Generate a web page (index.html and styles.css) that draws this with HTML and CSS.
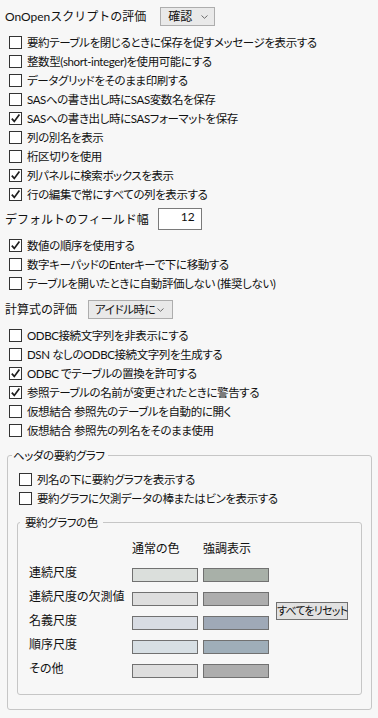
FILE: index.html
```html
<!DOCTYPE html>
<html lang="ja">
<head>
<meta charset="utf-8">
<title>テーブル設定</title>
<link rel="stylesheet" href="styles.css">
</head>
<body>
<div class="page">
  <div class="opt-row r1">
    <span class="lbl">OnOpenスクリプトの評価</span>
    <div class="select sel1"><span>確認</span><svg class="chev" viewBox="0 0 7 4" width="7" height="4"><path d="M0.5 0.5 L3.5 3.3 L6.5 0.5" fill="none" stroke="#6b6b6b" stroke-width="1"/></svg></div>
  </div>

  <div class="checks c1">
    <div class="cb"><span class="box"></span><span class="t">要約テーブルを閉じるときに保存を促すメッセージを表示する</span></div>
    <div class="cb"><span class="box"></span><span class="t">整数型(short-integer)を使用可能にする</span></div>
    <div class="cb"><span class="box"></span><span class="t">データグリッドをそのまま印刷する</span></div>
    <div class="cb"><span class="box"></span><span class="t">SASへの書き出し時にSAS変数名を保存</span></div>
    <div class="cb"><span class="box"><svg class="tick" viewBox="0 0 11 11" width="11" height="11"><path d="M1.8 5.6 L4.3 8.4 L9.4 1.6" fill="none" stroke="#1e1e1e" stroke-width="1.7"/></svg></span><span class="t">SASへの書き出し時にSASフォーマットを保存</span></div>
    <div class="cb"><span class="box"></span><span class="t">列の別名を表示</span></div>
    <div class="cb"><span class="box"></span><span class="t">桁区切りを使用</span></div>
    <div class="cb"><span class="box"><svg class="tick" viewBox="0 0 11 11" width="11" height="11"><path d="M1.8 5.6 L4.3 8.4 L9.4 1.6" fill="none" stroke="#1e1e1e" stroke-width="1.7"/></svg></span><span class="t">列パネルに検索ボックスを表示</span></div>
    <div class="cb"><span class="box"><svg class="tick" viewBox="0 0 11 11" width="11" height="11"><path d="M1.8 5.6 L4.3 8.4 L9.4 1.6" fill="none" stroke="#1e1e1e" stroke-width="1.7"/></svg></span><span class="t">行の編集で常にすべての列を表示する</span></div>
  </div>

  <div class="opt-row r2">
    <span class="lbl">デフォルトのフィールド幅</span>
    <div class="num">12</div>
  </div>

  <div class="checks c2">
    <div class="cb"><span class="box"><svg class="tick" viewBox="0 0 11 11" width="11" height="11"><path d="M1.8 5.6 L4.3 8.4 L9.4 1.6" fill="none" stroke="#1e1e1e" stroke-width="1.7"/></svg></span><span class="t">数値の順序を使用する</span></div>
    <div class="cb"><span class="box"></span><span class="t">数字キーパッドのEnterキーで下に移動する</span></div>
    <div class="cb"><span class="box"></span><span class="t">テーブルを開いたときに自動評価しない (推奨しない)</span></div>
  </div>

  <div class="opt-row r3">
    <span class="lbl">計算式の評価</span>
    <div class="select sel2"><span class="t">アイドル時に</span><svg class="chev" viewBox="0 0 7 4" width="7" height="4"><path d="M0.5 0.5 L3.5 3.3 L6.5 0.5" fill="none" stroke="#6b6b6b" stroke-width="1"/></svg></div>
  </div>

  <div class="checks c3">
    <div class="cb"><span class="box"></span><span class="t">ODBC接続文字列を非表示にする</span></div>
    <div class="cb"><span class="box"></span><span class="t">DSN なしのODBC接続文字列を生成する</span></div>
    <div class="cb"><span class="box"><svg class="tick" viewBox="0 0 11 11" width="11" height="11"><path d="M1.8 5.6 L4.3 8.4 L9.4 1.6" fill="none" stroke="#1e1e1e" stroke-width="1.7"/></svg></span><span class="t">ODBC でテーブルの置換を許可する</span></div>
    <div class="cb"><span class="box"><svg class="tick" viewBox="0 0 11 11" width="11" height="11"><path d="M1.8 5.6 L4.3 8.4 L9.4 1.6" fill="none" stroke="#1e1e1e" stroke-width="1.7"/></svg></span><span class="t">参照テーブルの名前が変更されたときに警告する</span></div>
    <div class="cb"><span class="box"></span><span class="t">仮想結合 参照先のテーブルを自動的に開く</span></div>
    <div class="cb"><span class="box"></span><span class="t">仮想結合 参照先の列名をそのまま使用</span></div>
  </div>

  <fieldset class="fs outer">
    <legend class="lg-outer"><span class="t">ヘッダの要約グラフ</span></legend>
    <div class="outer-body">
      <div class="checks c4">
        <div class="cb"><span class="box"></span><span class="t">列名の下に要約グラフを表示する</span></div>
        <div class="cb"><span class="box"></span><span class="t">要約グラフに欠測データの棒またはビンを表示する</span></div>
      </div>

      <fieldset class="fs inner">
        <legend class="lg-inner"><span class="t">要約グラフの色</span></legend>
        <div class="inner-body">
          <div class="colors">
            <span class="hd hd0"></span>
            <span class="hd hd1">通常の色</span>
            <span class="hd hd2">強調表示</span>

            <span class="clabel">連続尺度</span>
            <span class="cell n"><span class="sw" style="background:#dbdfdc"></span></span>
            <span class="cell h"><span class="sw" style="background:#a8b0a8"></span></span>

            <span class="clabel">連続尺度の欠測値</span>
            <span class="cell n"><span class="sw" style="background:#dedede"></span></span>
            <span class="cell h"><span class="sw" style="background:#adadad"></span></span>

            <span class="clabel">名義尺度</span>
            <span class="cell n"><span class="sw" style="background:#d8dce3"></span></span>
            <span class="cell h"><span class="sw" style="background:#9fa9b7"></span></span>

            <span class="clabel">順序尺度</span>
            <span class="cell n"><span class="sw" style="background:#d7dfe4"></span></span>
            <span class="cell h"><span class="sw" style="background:#9faeb9"></span></span>

            <span class="clabel">その他</span>
            <span class="cell n"><span class="sw" style="background:#dedede"></span></span>
            <span class="cell h"><span class="sw" style="background:#adadad"></span></span>

            <button class="reset" type="button">すべてをリセット</button>
          </div>
        </div>
      </fieldset>
    </div>
  </fieldset>
</div>
</body>
</html>
```

FILE: styles.css
```css
* {
  box-sizing: border-box;
}

html,
body {
  margin: 0;
  padding: 0;
  background: #f7f7f7;
}

body {
  width: 378px;
  height: 718px;
  overflow: hidden;
  font-family: Lato, "Noto Sans CJK JP", sans-serif;
  font-size: 12px;
  font-feature-settings: "palt";
  color: #111;
  line-height: 19px;
}

.page {
  padding: 7px 6px 0 5px;
}

/* option text uses narrower proportional kana */
.t {
  font-size: 11.5px;
  letter-spacing: -0.4px;
}

/* label + control rows */
.opt-row {
  display: flex;
  align-items: center;
  gap: 11px;
  height: 19px;
  white-space: nowrap;
}

.lbl {
  font-feature-settings: normal;
}

.r1 {
  gap: 14px;
}

.r2 {
  height: 22px;
  margin-top: 4px;
  gap: 9px;
}

.r3 {
  margin-top: 7px;
}

.select {
  display: flex;
  align-items: center;
  height: 19px;
  padding: 0 6px 0 7px;
  border: 1px solid #adadad;
  background: #e9e9e9;
  line-height: 17px;
}

.sel1 {
  width: 55px;
}

.sel2 {
  width: 85px;
  padding-left: 6px;
  padding-right: 8px;
}

.chev {
  margin-left: auto;
  flex: none;
}

.num {
  width: 44px;
  height: 22px;
  border: 1px solid #7a7a7a;
  background: #fff;
  text-align: right;
  padding: 0 6px 0 0;
  line-height: 16px;
}

/* checkbox lists */
.checks {
  display: flex;
  flex-direction: column;
}

.c1 {
  margin-top: 7px;
}

.c2 {
  margin-top: 6px;
}

.c3 {
  margin-top: 7px;
}

.cb {
  display: flex;
  align-items: center;
  gap: 5px;
  height: 19px;
  padding-left: 4px;
  white-space: nowrap;
}

.box {
  flex: none;
  width: 13px;
  height: 13px;
  border: 1px solid #333;
  background: #fff;
  display: flex;
  align-items: center;
  justify-content: center;
}

.tick {
  display: block;
}

/* group boxes */
.fs {
  margin: 0;
  padding: 0;
  min-width: 0;
  border: 1px solid #c6c6c6;
  border-radius: 3px;
}

.fs legend {
  line-height: 19px;
  white-space: nowrap;
}

.outer {
  margin: 6px 0 0 2px;
}

.lg-outer {
  margin-left: 4px;
  padding: 0 3px 0 1px;
}

.outer-body {
  padding: 5px 9px 14px 9px;
}

.c4 .cb {
  padding-left: 2px;
}

.inner {
  margin-top: 5px;
}

.lg-inner {
  margin-left: 2px;
  padding: 0 5px;
}

.inner-body {
  padding: 5px 0 13px 11px;
}

/* colour table */
.colors {
  display: grid;
  grid-template-columns: 98px 66px 66px auto;
  grid-template-rows: 24px repeat(5, 24px);
  column-gap: 5px;
  row-gap: 0;
  align-items: center;
}

.hd {
  grid-row: 1;
  position: relative;
  top: -1px;
}

.hd0 {
  grid-column: 1;
}

.hd1 {
  grid-column: 2;
}

.hd2 {
  grid-column: 3;
}

.clabel {
  grid-column: 1;
  white-space: nowrap;
  position: relative;
  top: -1px;
}

.cell {
  display: flex;
  align-items: center;
  height: 24px;
  position: relative;
  top: 2px;
}

.cell.n {
  grid-column: 2;
}

.cell.h {
  grid-column: 3;
}

.sw {
  display: block;
  width: 66px;
  height: 14px;
  border: 1px solid #717171;
}

.reset {
  grid-column: 4;
  grid-row: 3 / span 2;
  align-self: center;
  justify-self: start;
  margin: 0 0 0 2px;
  height: 18px;
  padding: 0;
  border: 1px solid #707070;
  background: #e1e1e1;
  font-family: inherit;
  font-size: 11px;
  letter-spacing: -0.8px;
  font-feature-settings: "palt";
  line-height: 16px;
  color: #111;
  white-space: nowrap;
  position: relative;
  top: 2px;
}
```
